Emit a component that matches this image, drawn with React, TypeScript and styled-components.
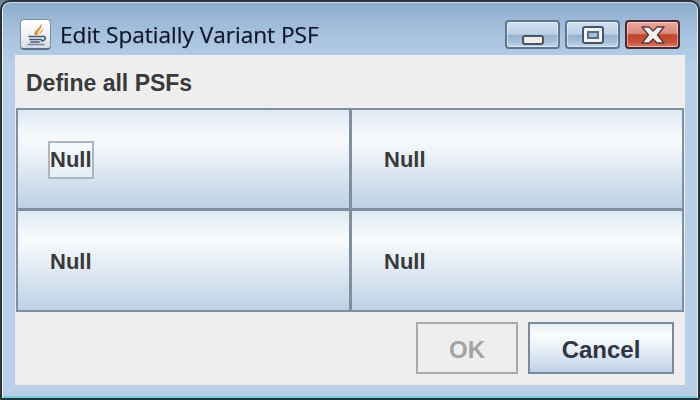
import styled, { createGlobalStyle } from "styled-components";

const GlobalStyle = createGlobalStyle`
  html, body {
    margin: 0;
    padding: 0;
    background: #6f8296;
  }
  #root {
    width: 700px;
    height: 400px;
    overflow: hidden;
  }
`;

const Frame = styled.div`
  box-sizing: border-box;
  width: 700px;
  height: 400px;
  display: flex;
  flex-direction: column;
  border: 2px solid #2b3238;
  border-bottom-color: #23343c;
  border-radius: 10px 10px 2px 2px;
  padding: 0 13px 13px 13px;
  background: linear-gradient(180deg, #8eadcd 0%, #a9c4e0 9%, #b7cfe7 16%, #b9d0e8 100%);
  box-shadow: inset 1px 0 0 #e6f2f4, inset -1px 0 0 #dfeef2, inset 0 1px 0 #c9dbea, inset 0 -2px 0 #6fd0d6;
  filter: blur(0.6px);
`;

const TitleBar = styled.div`
  box-sizing: border-box;
  flex: none;
  height: 53px;
  display: flex;
  align-items: center;
  padding: 12px 5px 0 5px;
  gap: 9px;
`;

const AppIcon = styled.div`
  width: 31px;
  height: 31px;
  box-sizing: border-box;
  border: 1px solid #7d8ea3;
  border-bottom: 2px solid #5e7085;
  border-radius: 4px;
  background: linear-gradient(180deg, #ffffff 0%, #eef1f4 60%, #d5dbe3 100%);
  display: flex;
  align-items: center;
  justify-content: center;
`;

const Title = styled.div`
  flex: 1;
  font-family: "Open Sans", "Liberation Sans", sans-serif;
  font-size: 22.6px;
  color: #10162a;
  -webkit-text-stroke: 0.25px #10162a;
  white-space: nowrap;
`;

const Controls = styled.div`
  display: flex;
  gap: 5px;
`;

const Control = styled.div<{ $close?: boolean }>`
  box-sizing: border-box;
  width: 55px;
  height: 29px;
  display: flex;
  align-items: center;
  justify-content: center;
  border-radius: 4px;
  border: 2px solid ${(p) => (p.$close ? "#4a2a34" : "#5f7690")};
  background: ${(p) =>
    p.$close
      ? "linear-gradient(180deg, #e9a79b 0%, #db8b7d 45%, #c2452c 52%, #c8513a 80%, #dc7f66 100%)"
      : "linear-gradient(180deg, #d2e0ef 0%, #bdd0e5 48%, #98b2ce 54%, #a9c1da 80%, #c6d8ea 100%)"};
  box-shadow: inset 0 0 0 1px rgba(255, 255, 255, 0.45);
`;

const MinGlyph = styled.div`
  box-sizing: border-box;
  width: 22px;
  height: 10px;
  margin-top: 10px;
  border: 2px solid #45566c;
  border-radius: 3px;
  background: #f0ede6;
`;

const MaxGlyph = styled.div`
  box-sizing: border-box;
  width: 22px;
  height: 18px;
  border: 2px solid #45566c;
  border-radius: 3px;
  background: #f1f3f5;
  display: flex;
  align-items: center;
  justify-content: center;
  &::after {
    content: "";
    width: 8px;
    height: 4px;
    border: 2px solid #5a6d84;
    background: #a9bfd6;
  }
`;

const Panel = styled.div`
  flex: 1;
  background: #eeeeee;
  display: flex;
  flex-direction: column;
  padding: 0 1px;
`;

const Heading = styled.div`
  box-sizing: border-box;
  flex: none;
  height: 53px;
  display: flex;
  align-items: center;
  padding: 3px 10px 0;
  font-family: "Liberation Sans", Arial, sans-serif;
  font-weight: bold;
  font-size: 23px;
  color: #3a3a3a;
`;

const Grid = styled.div`
  box-sizing: border-box;
  flex: none;
  display: grid;
  grid-template-columns: 331px 330px;
  grid-template-rows: 98px 99px;
  gap: 3px;
  padding: 2px;
  height: 204px;
  background: #7f8fa0;
`;

const Cell = styled.div`
  box-sizing: border-box;
  display: flex;
  align-items: center;
  padding: 2px 0 0 31px;
  background: linear-gradient(180deg, #dce8f3 0%, #eef4f9 16%, #f7fafc 30%, #e8eff6 50%, #c9daea 85%, #bdd1e6 100%);
  font-family: "Liberation Sans", Arial, sans-serif;
  font-weight: bold;
  font-size: 22px;
  color: #3a3a3a;
`;

const CellLabel = styled.span<{ $focused?: boolean }>`
  display: inline-block;
  padding: 5px 1px;
  outline: ${(p) => (p.$focused ? "2px solid #a9b6c4" : "none")};
  outline-offset: -1px;
  background: ${(p) => (p.$focused ? "rgba(255,255,255,0.35)" : "transparent")};
`;

const Footer = styled.div`
  flex: 1;
  display: flex;
  justify-content: flex-end;
  align-items: flex-start;
  gap: 10px;
  padding: 10px 10px 0 0;
`;

const DialogButton = styled.div<{ $w: number; $disabled?: boolean }>`
  box-sizing: border-box;
  width: ${(p) => p.$w}px;
  height: 52px;
  display: flex;
  align-items: center;
  justify-content: center;
  padding-top: 3px;
  font-family: "Liberation Sans", Arial, sans-serif;
  font-weight: bold;
  font-size: 24px;
  border: 2px solid ${(p) => (p.$disabled ? "#a9a9a9" : "#7b8a9c")};
  color: ${(p) => (p.$disabled ? "#a3a3a3" : "#2f3542")};
  background: ${(p) =>
    p.$disabled
      ? "#eeeeee"
      : "linear-gradient(180deg, #e4edf6 0%, #fbfdfe 22%, #e9f0f7 50%, #c8d9ea 88%, #bed2e7 100%)"};
`;

const JavaIcon = () => (
  <svg width="24" height="24" viewBox="0 0 24 24" fill="none">
    <path d="M11 13 C8 9 17 7 17 1 C20 6 12 9 14 13Z" fill="#e58a2e" />
    <path d="M15 12 C14 10 18 9 19 6 C20 9 17 10 17 12Z" fill="#ecae6a" />
    <path d="M5 14.500 H18 M6 17.500 H17 M7 20 H15" stroke="#43586f" strokeWidth="1.7" strokeLinecap="round" />
    <path d="M18 14.500 C23 13.500 22 19 17 19" stroke="#43586f" strokeWidth="1.5" />
    <path d="M4 22.500 H20" stroke="#6f8aa5" strokeWidth="1.4" strokeLinecap="round" />
  </svg>
);

const CloseGlyph = () => (
  <svg width="30" height="22" viewBox="0 0 30 22">
    <path
      d="M4 3 L11 3 L15 7 L19 3 L26 3 L19.500 11 L26 19 L19 19 L15 15 L11 19 L4 19 L10.500 11Z"
      fill="#f5f2f0"
      stroke="#5c3a3f"
      strokeWidth="1.4"
      strokeLinejoin="round"
    />
  </svg>
);

export default function App() {
  return (
    <>
      <GlobalStyle />
      <Frame>
        <TitleBar>
          <AppIcon>
            <JavaIcon />
          </AppIcon>
          <Title>Edit Spatially Variant PSF</Title>
          <Controls>
            <Control>
              <MinGlyph />
            </Control>
            <Control>
              <MaxGlyph />
            </Control>
            <Control $close>
              <CloseGlyph />
            </Control>
          </Controls>
        </TitleBar>
        <Panel>
          <Heading>Define all PSFs</Heading>
          <Grid>
            <Cell>
              <CellLabel $focused>Null</CellLabel>
            </Cell>
            <Cell>
              <CellLabel>Null</CellLabel>
            </Cell>
            <Cell>
              <CellLabel>Null</CellLabel>
            </Cell>
            <Cell>
              <CellLabel>Null</CellLabel>
            </Cell>
          </Grid>
          <Footer>
            <DialogButton $w={102} $disabled>
              OK
            </DialogButton>
            <DialogButton $w={146}>Cancel</DialogButton>
          </Footer>
        </Panel>
      </Frame>
    </>
  );
}
